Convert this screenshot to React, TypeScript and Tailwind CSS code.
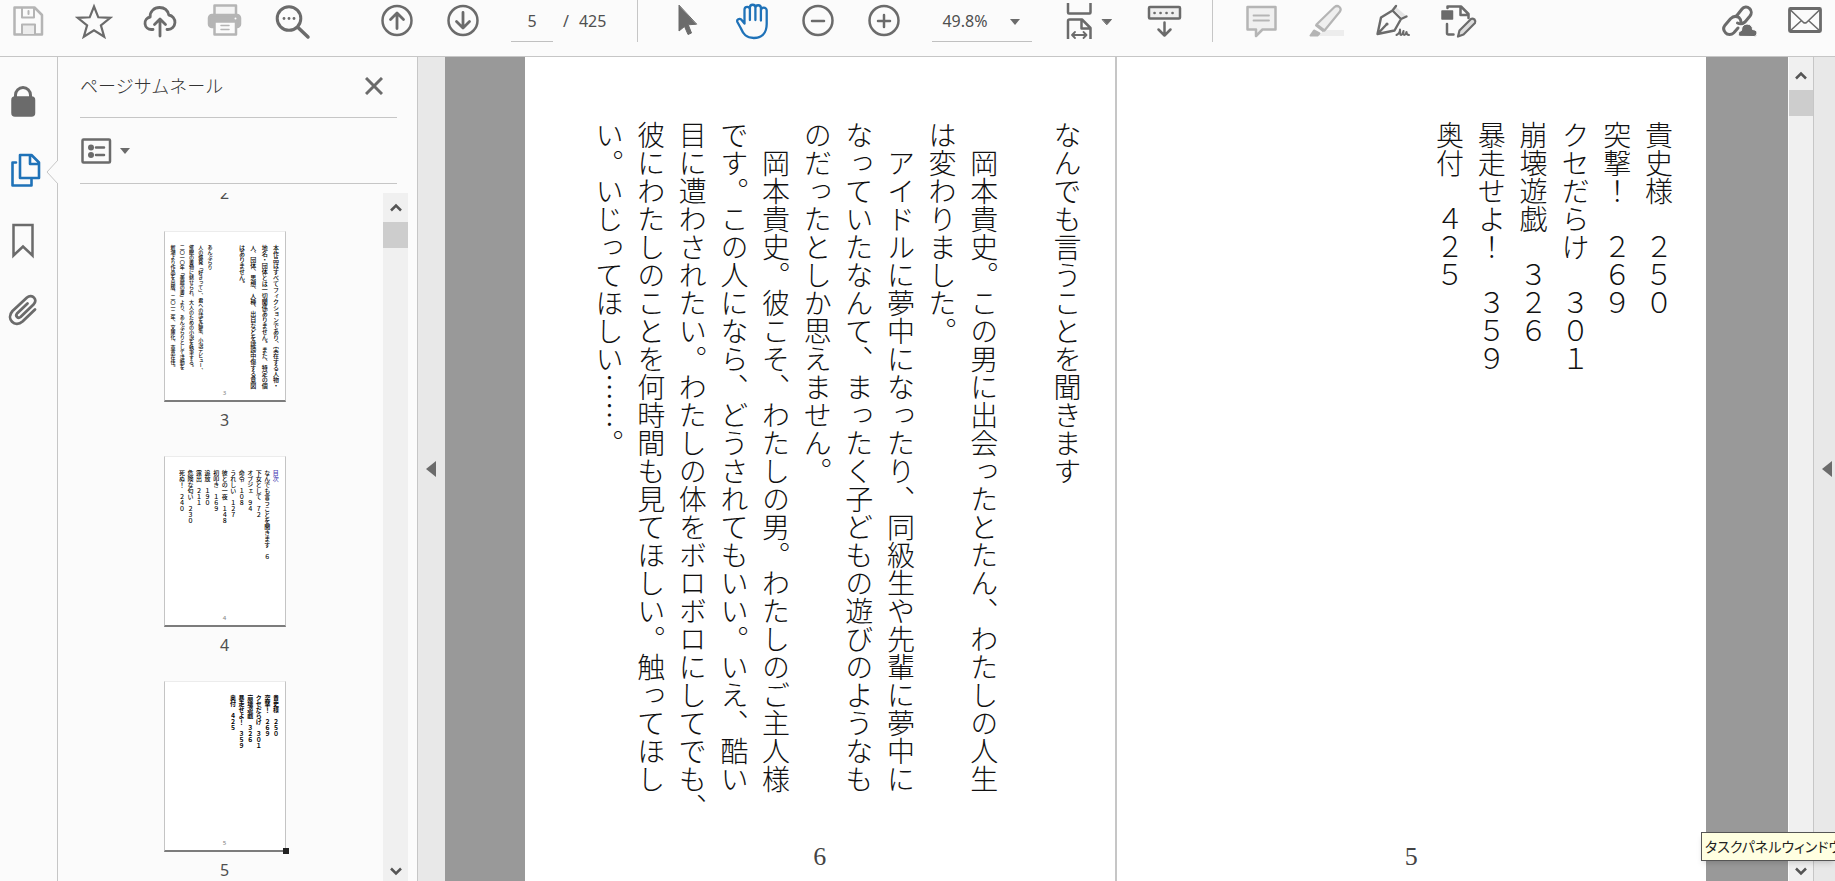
import React, { useState } from "react";

const INK = "#6b6b6b";
const PALE = "#b5b5b5";
const BLUE = "#1f72b8";

type IconProps = {
  color?: string;
  width?: number;
  stroke?: number;
  children: React.ReactNode;
};

const Icon = ({ color = INK, width = 40, stroke = 2.5, children }: IconProps) => (
  <svg
    width={width}
    height={42}
    viewBox={`0 0 ${width} 42`}
    fill="none"
    stroke={color}
    strokeWidth={stroke}
    strokeLinecap="round"
    strokeLinejoin="round"
    aria-hidden="true"
  >
    {children}
  </svg>
);

const SaveIcon = () => (
  <Icon color={PALE}>
    <path d="M6.500 7.500h20l7.500 7.500v19.500H6.500z" />
    <path d="M14 8v9.500h12V8M20.500 11v3" strokeWidth={2} />
    <path d="M14 34v-9.500h13V34" fill="#ececec" strokeWidth={2} />
  </Icon>
);

const StarIcon = () => (
  <Icon stroke={2.2}>
    <path
      strokeLinejoin="miter"
      d="M20 6.500l4.300 10.800 12 .5-9.400 7.600 3.300 11.300L20 30.200 9.800 36.700l3.300-11.300-9.400-7.600 12-.5z"
    />
  </Icon>
);

const CloudIcon = () => (
  <Icon stroke={2.8}>
    <path d="M13 29.500h-1.500A6.300 6.300 0 0 1 10.200 17C9.500 12 14 7.500 19.500 7.500c5 0 8.300 3 9.300 7.500a7.300 7.300 0 0 1-.8 14.500h-1" />
    <path d="M20 36V19.500M14.500 24.500l5.500-5.500 5.500 5.500" />
  </Icon>
);

const PrintIcon = () => (
  <Icon color={PALE}>
    <path d="M8.500 15V5.500H30V15" fill="#f4f4f4" />
    <rect x="3" y="15" width="31" height="12" rx="3" fill={PALE} />
    <rect x="8.500" y="21.500" width="21.500" height="13" fill="#fbfbfb" />
    <path d="M15 25.500h8M15 29.500h8" strokeWidth={1.500} />
    <circle cx="29.500" cy="18.500" r="1" fill="#fff" stroke="none" />
  </Icon>
);

const SearchIcon = () => (
  <Icon stroke={3}>
    <circle cx="17" cy="18.500" r="11.800" />
    <path d="M26 27.500l10 9.500" strokeWidth={3.500} />
    <g fill={INK} stroke="none">
      <circle cx="12" cy="18.500" r="1.400" />
      <circle cx="17" cy="18.500" r="1.400" />
      <circle cx="22" cy="18.500" r="1.400" />
    </g>
  </Icon>
);

const UpIcon = () => (
  <Icon>
    <circle cx="20" cy="20.500" r="14.500" />
    <path d="M20 28.500V13.500M13.500 19.500l6.500-6.500 6.500 6.500" strokeWidth={2.800} />
  </Icon>
);

const DownIcon = () => (
  <Icon>
    <circle cx="20" cy="20.500" r="14.500" />
    <path d="M20 12.500v15M13.500 21.500l6.500 6.500 6.500-6.500" strokeWidth={2.800} />
  </Icon>
);

const PointerIcon = () => (
  <Icon stroke={1}>
    <path fill={INK} d="M12 5.500v25.500l5.500-4.500 3.500 8 3.500-1.500-3.200-8.200 8-.6z" />
  </Icon>
);

const HandIcon = () => (
  <Icon color={BLUE} stroke={2.300}>
    <path d="M11.500 23.500V9.500a2.700 2.700 0 0 1 5.400 0V20M16.900 20V7.500a2.700 2.700 0 0 1 5.500 0V20M22.400 8a2.700 2.700 0 0 1 5.500 0v12.500M27.900 10.500a2.800 2.800 0 0 1 5.800 0V24c0 9-5 14-13 14-7.500 0-10.500-4-13-10l-3.300-6c-1-2.500 2-4 4-2.300l3.100 3.800" />
  </Icon>
);

const MinusIcon = () => (
  <Icon>
    <circle cx="19" cy="20.500" r="14.500" />
    <path d="M13 21h12" />
  </Icon>
);

const PlusIcon = () => (
  <Icon>
    <circle cx="19" cy="20.500" r="14.500" />
    <path d="M13 21h12M19 15v12" />
  </Icon>
);

const FitWidthIcon = () => (
  <Icon width={46}>
    <g strokeLinecap="butt">
      <path d="M2 3v9.500q0 1 1 1h20.500q1 0 1-1V3" />
      <path d="M2 39V21q0-1.500 1.500-1.500H16l8.500 8.500v11M15.500 19.500v9h9" />
    </g>
    <path d="M6.500 35h13.500M9 32l-3 3 3 3M17.500 32l3 3-3 3" strokeWidth={1.800} />
    <path d="M36.500 19.500h9l-4.500 5z" fill={INK} strokeWidth={1} />
  </Icon>
);

const KeyboardIcon = () => (
  <Icon>
    <rect x="5" y="7" width="31" height="11.500" rx="1" fill="#efefef" />
    <path d="M10.500 13h.1M16.500 13h.1M22.500 13h.1M28.500 13h.1" strokeWidth={2.600} />
    <path d="M20.500 22.500V35M14.500 29.500l6 6 6-6" />
  </Icon>
);

const CommentIcon = () => (
  <Icon color={PALE}>
    <path d="M6.500 7h28v22.500h-13l-6.500 6.500v-6.500H6.500z" fill="#f0f0f0" />
    <path d="M12.500 15.500H28M12.500 20.500H28" strokeWidth={1.800} />
  </Icon>
);

const HighlightIcon = () => (
  <Icon color={PALE}>
    <path d="M17 30h20v6H12z" fill="#ededed" stroke="none" />
    <path d="M9.500 24.500L27.500 7q2.500-2 5 0 2.200 2 .3 4.800L17.500 30.500z" fill="#efefef" stroke={PALE} strokeWidth={2.200} />
    <path d="M9 25.500l7 5.500M7 30.500L3.500 35.500h7l2-2z" fill={PALE} strokeWidth={2} />
  </Icon>
);

const SignIcon = () => (
  <Icon stroke={2.400}>
    <path d="M22.500 6.500L33.500 16l-3 3-10-10z" fill="#e4e4e4" stroke="none" />
    <path d="M23 6l-3.500 4.500 8.500 8.500 5.500-2.500M19.500 10.500L8 17.500 4.500 34l17-3.500L28 19M4.500 34l8.500-9" />
    <circle cx="14" cy="24" r="1.600" fill={INK} stroke="none" />
    <path d="M23.500 35c2-1 3.500-3 3.500-5.500.500 2-.5 5.500 1 5.500s2-3 2.500-4c0 1.500-.5 4 1 4s1.500-2.500 2-3c0 1.500 0 3 2.500 3" strokeWidth={2} />
  </Icon>
);

const EditPageIcon = () => (
  <Icon>
    <path d="M8.500 8V6.500H22l7.500 7.500v4M21.500 7v8h8M8 24v9q0 1.500 1.500 1.500h5" />
    <rect x="3" y="11" width="10.500" height="8" fill={INK} strokeWidth={1.500} />
    <path d="M19 36.500l1.500-6L32 19q1.500-1 3.500.5 1.500 2 .5 3.500L24.500 34.500z" fill="#ddd" strokeWidth={2.200} />
  </Icon>
);

const LinkIcon = () => (
  <Icon stroke={3}>
    <path d="M17.500 16L23 9a5 5 0 0 1 7.500-.5c2.500 2 2 5.500.5 7.500l-5 6q-3.500 3-7.500 1" />
    <path d="M14.500 33c-2 2-6 2-8-.3-2.500-2.500-2-5.500-.5-7.500l5.500-6.500q4-4 8.500-1.200 2 2 2 4.500" />
    <path d="M19 28l-3.500 4" />
    <path d="M20 36q-2-4 2.500-5.500 0-6 5.500-6.500 5.500.5 5.500 5.500 4.500.5 4.500 3.500 0 3.500-2.500 3.500z" fill={INK} stroke="#fbfbfb" strokeWidth={1} />
  </Icon>
);

const MailIcon = () => (
  <Icon stroke={2.800}>
    <rect x="4.500" y="8.500" width="31" height="23" rx="1" />
    <path d="M5 9.500l13.500 13q1.500 1 3 0L35 9.500M5 31l11.500-10.500M35 31L23.500 20.500" strokeWidth={1.600} />
  </Icon>
);

const ToolButton = ({ label, className = "", children }: { label: string; className?: string; children: React.ReactNode }) => (
  <button type="button" aria-label={label} className={`shrink-0 ${className}`}>
    {children}
  </button>
);

const Toolbar = () => {
  const [page, setPage] = useState("5");

  return (
    <header className="flex h-[57px] shrink-0 items-start border-b border-[#c6c6c6] bg-[#fbfbfb] pl-2 pr-[10px] text-base text-[#4f4f4f]">
      <div className="flex gap-[26px]">
        <ToolButton label="保存"><SaveIcon /></ToolButton>
        <ToolButton label="スター"><StarIcon /></ToolButton>
        <ToolButton label="アップロード"><CloudIcon /></ToolButton>
        <ToolButton label="印刷"><PrintIcon /></ToolButton>
        <ToolButton label="検索"><SearchIcon /></ToolButton>
      </div>
      <div className="ml-[65px] flex gap-[26px]">
        <ToolButton label="前のページ"><UpIcon /></ToolButton>
        <ToolButton label="次のページ"><DownIcon /></ToolButton>
      </div>
      <div className="ml-7 flex h-[42px] items-center">
        <input
          aria-label="ページ番号"
          value={page}
          onChange={(e) => setPage(e.target.value)}
          className="h-full w-[42px] border-b border-[#c0c0c0] bg-transparent text-center outline-none"
        />
        <span className="ml-[10px]">/</span>
        <span className="ml-[10px]">425</span>
      </div>
      <div className="ml-[31px] h-[42px] w-px bg-[#c6c6c6]" />
      <div className="ml-[29px] flex gap-[26px]">
        <ToolButton label="選択"><PointerIcon /></ToolButton>
        <ToolButton label="手のひら"><HandIcon /></ToolButton>
        <ToolButton label="縮小"><MinusIcon /></ToolButton>
        <ToolButton label="拡大"><PlusIcon /></ToolButton>
      </div>
      <div className="relative ml-[27px] h-[42px] w-[100px] shrink-0">
        <select
          aria-label="ズーム"
          className="h-full w-full appearance-none border-b border-[#c0c0c0] bg-transparent pl-[10px] outline-none"
        >
          <option>49.8%</option>
          <option>100%</option>
        </select>
        <svg width="10" height="6" viewBox="0 0 10 6" className="pointer-events-none absolute right-3 top-[19px]">
          <path d="M0 0h10L5 6z" fill={INK} />
        </svg>
      </div>
      <ToolButton label="幅に合わせる" className="ml-[34px]"><FitWidthIcon /></ToolButton>
      <ToolButton label="ツールバーを表示" className="ml-8"><KeyboardIcon /></ToolButton>
      <div className="ml-7 h-[42px] w-px bg-[#c6c6c6]" />
      <div className="ml-7 flex gap-[26px]">
        <ToolButton label="注釈"><CommentIcon /></ToolButton>
        <ToolButton label="ハイライト"><HighlightIcon /></ToolButton>
        <ToolButton label="署名"><SignIcon /></ToolButton>
        <ToolButton label="編集"><EditPageIcon /></ToolButton>
      </div>
      <div className="ml-auto flex gap-[26px]">
        <ToolButton label="リンクを共有"><LinkIcon /></ToolButton>
        <ToolButton label="メール"><MailIcon /></ToolButton>
      </div>
    </header>
  );
};

const Rail = () => (
  <nav className="relative flex w-[58px] shrink-0 flex-col gap-7 border-r border-[#c6c6c6] bg-[#fbfbfb] pl-1 pt-[22px]">
    <ToolButton label="セキュリティ">
      <Icon stroke={3}>
        <path d="M11.500 20v-4a7.500 7.500 0 0 1 15 0v4" />
        <rect x="8" y="18" width="22.500" height="19" rx="3" fill={INK} strokeWidth={1.500} />
      </Icon>
    </ToolButton>
    <ToolButton label="サムネール">
      <Icon color={BLUE} stroke={2.600}>
        <path d="M12 13.500H8.500v23h19v-6" />
        <path d="M16 6h11.500l7.500 7.500v15.500H16zM26 6.500V15h8.500" />
      </Icon>
    </ToolButton>
    <ToolButton label="しおり">
      <Icon>
        <path strokeLinejoin="miter" d="M9.500 6h19v30.500L19 27.500l-9.500 9z" />
      </Icon>
    </ToolButton>
    <ToolButton label="添付ファイル">
      <Icon stroke={2.800}>
        <path d="M23.500 14.500L13 24.500c-2 2.500 1 5.500 3.500 3.500L29.500 15.500c5-5-1.500-11-6.500-7L8.500 22c-7 8 2.500 17 10 10.500L31 20.500" />
      </Icon>
    </ToolButton>
    {/* notch pointing at the open panel */}
    <svg width="12" height="24" viewBox="0 0 12 24" className="absolute -right-px top-[103px]">
      <path d="M12 0L1 12l11 12" fill="#fbfbfb" stroke="#c6c6c6" />
    </svg>
  </nav>
);

const Chevron = ({ down = false }: { down?: boolean }) => (
  <svg width="12" height="9" viewBox="0 0 12 9" fill="none" stroke="#555" strokeWidth="2.500">
    <path d={down ? "M1 1.500l5 5 5-5" : "M1 7.500l5-5 5 5"} />
  </svg>
);

const ScrollBar = ({ className = "" }: { className?: string }) => (
  <div className={`flex w-[25px] shrink-0 flex-col bg-[#f0f0f0] ${className}`}>
    <button type="button" aria-label="上へスクロール" className="flex h-[29px] shrink-0 items-center justify-center">
      <Chevron />
    </button>
    <div className="h-[26px] bg-[#cdcdcd]" />
    <button type="button" aria-label="下へスクロール" className="mt-auto flex h-5 shrink-0 items-center justify-center">
      <Chevron down />
    </button>
  </div>
);

// Vertical columns run right to left
const Columns = ({ lines, className }: { lines: string[]; className: string }) => (
  <div className={`flex flex-row-reverse justify-between font-['Noto_Sans_CJK_JP',sans-serif] ${className}`}>
    {lines.map((line, index) => (
      <p key={index} className="w-[1em] whitespace-nowrap leading-none [writing-mode:vertical-rl]">
        {line}
      </p>
    ))}
  </div>
);

const contentsStart = [
  "目次",
  "なんでも言うことを聞きます　６",
  "下女として　７２",
  "オブジェ　９４",
  "命令　１０８",
  "うれしい　１２７",
  "彼との一夜　１４８",
  "初叩き　１６９",
  "追放　１９０",
  "露出　２１１",
  "危険な匂い　２３０",
  "死ぬ！　２４０",
];

const contentsEnd = [
  "貴史様　２５０",
  "突撃！　２６９",
  "クセだらけ　３０１",
  "崩壊遊戯　３２６",
  "暴走せよ！　３５９",
  "奥付　４２５",
];

const chapter = [
  "なんでも言うことを聞きます",
  "",
  "　岡本貴史。この男に出会ったとたん、わたしの人生",
  "は変わりました。",
  "　アイドルに夢中になったり、同級生や先輩に夢中に",
  "なっていたなんて、まったく子どもの遊びのようなも",
  "のだったとしか思えません。",
  "　岡本貴史。彼こそ、わたしの男。わたしのご主人様",
  "です。この人になら、どうされてもいい。いえ、酷い",
  "目に遭わされたい。わたしの体をボロボロにしてでも、",
  "彼にわたしのことを何時間も見てほしい。触ってほし",
  "い。いじってほしい……。",
];

const notice = [
  "本作品はすべてフィクションであり、実在する人物・",
  "地名・団体とは一切関係ありません。また、特定の個",
  "人、団体、思想、人種、出自などを誹謗中傷する意図",
  "はありません。",
];

const profile = [
  "あんぷらり",
  "人の爆発「好きって」、君への話を結集、小説デビュー、",
  "催眠の書物に魅せられ、大人のための小説を執筆する。",
  "二〇一〇年「美麗の書」より、あんぷらりとして活動を",
  "新潮より作品を出版、二〇一二年、文庫化、東京在住。",
];

const Thumbnail = ({ number, current = false, children }: { number: number; current?: boolean; children: React.ReactNode }) => (
  <li className="flex h-[225px] flex-col items-center">
    <button
      type="button"
      aria-label={`${number} ページ`}
      className="relative flex h-[171px] w-[122px] flex-col border border-b-2 border-[#c4c4c4] border-b-[#7c7c7c] border-t-[#ececec] bg-white px-[6px] pb-[3px] pt-[13px] text-left font-medium text-black"
    >
      <div className="flex min-h-0 flex-1 flex-row-reverse justify-between">{children}</div>
      <span className="self-center text-[6px] leading-[8px] text-[#888]">{number}</span>
      {current && <span className="absolute -bottom-1 -right-1 h-[6px] w-[6px] bg-[#222]" />}
    </button>
    <span className="mt-[6px] text-base leading-6 text-[#4f4f4f]">{number}</span>
  </li>
);

const ThumbnailPanel = () => (
  <aside className="flex w-[360px] shrink-0 flex-col border-r border-[#c6c6c6] bg-[#fbfbfb] pl-[22px]">
    <div className="mr-5 flex h-[61px] items-center justify-between border-b border-[#c6c6c6] pb-[2px] pr-[14px]">
      <h2 className="text-lg font-light text-[#333]">ページサムネール</h2>
      <button type="button" aria-label="閉じる">
        <svg width="18" height="18" viewBox="0 0 18 18" stroke={INK} strokeWidth="3">
          <path d="M1 1l16 16M17 1L1 17" />
        </svg>
      </button>
    </div>
    <div className="mr-5 flex h-[66px] items-center border-b border-[#c6c6c6]">
      <button type="button" aria-label="オプション" className="flex items-center gap-2">
        <svg width="32" height="26" viewBox="0 0 32 26" fill="none" stroke={INK} strokeWidth="2.500">
          <rect x="2.500" y="1.500" width="27.500" height="23" rx="1" />
          <path d="M16 9.500h8M16 17h8" strokeLinecap="round" />
          <circle cx="11" cy="9.500" r="3" fill={INK} stroke="none" />
          <circle cx="11" cy="17" r="3" fill={INK} stroke="none" />
        </svg>
        <svg width="10" height="6" viewBox="0 0 10 6">
          <path d="M0 0h10L5 6z" fill={INK} />
        </svg>
      </button>
    </div>
    <div className="mr-[9px] mt-[9px] flex min-h-0 flex-1">
      <div className="flex min-h-0 flex-1 flex-col justify-start overflow-hidden pl-[6px]">
        <span className="-mt-3 block text-center text-base leading-6 text-[#4f4f4f]">2</span>
        <ul className="mt-[26px]">
          <Thumbnail number={3}>
            <Columns lines={notice} className="w-10 shrink-0 text-[6px]" />
            <Columns lines={profile} className="mr-[10px] w-[42px] shrink-0 text-[5px]" />
          </Thumbnail>
          <Thumbnail number={4}>
            <Columns lines={contentsStart} className="w-[100px] shrink-0 text-[6px] [&>p:first-child]:text-[#4a3fb5]" />
          </Thumbnail>
          <Thumbnail number={5} current>
            <Columns lines={contentsEnd} className="w-[49px] shrink-0 text-[6px] font-bold" />
          </Thumbnail>
        </ul>
      </div>
      <ScrollBar className="ml-5" />
    </div>
  </aside>
);

const Gutter = ({ label, className }: { label: string; className: string }) => (
  <button type="button" aria-label={label} className={`flex shrink-0 items-center bg-[#e8e8e8] ${className}`}>
    <svg width="10" height="16" viewBox="0 0 10 16">
      <path d="M10 0v16L0 8z" fill={INK} />
    </svg>
  </button>
);

const Page = ({ number, children }: { number: number; children: React.ReactNode }) => (
  <article className="flex min-w-0 flex-1 flex-col bg-white pt-16">
    <div className="flex min-h-0 flex-1 flex-row-reverse">{children}</div>
    <footer className="h-[42px] shrink-0 text-center font-['Liberation_Serif',serif] text-[26px] leading-9 text-[#444]">
      {number}
    </footer>
  </article>
);

const App = () => (
  <main className="relative flex h-screen flex-col overflow-hidden bg-[#fbfbfb] font-['Noto_Sans','Noto_Sans_CJK_JP',sans-serif]">
    <Toolbar />
    <div className="flex min-h-0 flex-1">
      <Rail />
      <ThumbnailPanel />
      <Gutter label="パネルを閉じる" className="w-[27px] pl-2" />
      <section className="flex min-w-0 flex-1 bg-[#999] pl-20 pr-[82px] text-[28px] font-light text-[#111]">
        <div className="flex min-w-0 flex-1 gap-[2px] bg-[#c6c6c6]">
          <Page number={6}>
            <Columns lines={chapter} className="mr-[33px] w-[486px] shrink-0" />
          </Page>
          <Page number={5}>
            <Columns lines={contentsEnd} className="mr-[33px] w-[237px] shrink-0" />
          </Page>
        </div>
      </section>
      <ScrollBar className="border-l border-[#fbfbfb] pt-1" />
      <Gutter label="ツールパネルを開く" className="w-[22px] border-l border-[#c6c6c6] pl-2" />
    </div>
    <div
      role="tooltip"
      className="absolute bottom-5 left-[1701px] right-0 overflow-hidden whitespace-nowrap border border-r-0 border-[#555] bg-[#ffffe1] pl-[3px] text-sm leading-[27px] text-[#222] shadow-md [font-feature-settings:'palt']"
    >
      タスクパネルウィンドウ
    </div>
  </main>
);

export default App;
